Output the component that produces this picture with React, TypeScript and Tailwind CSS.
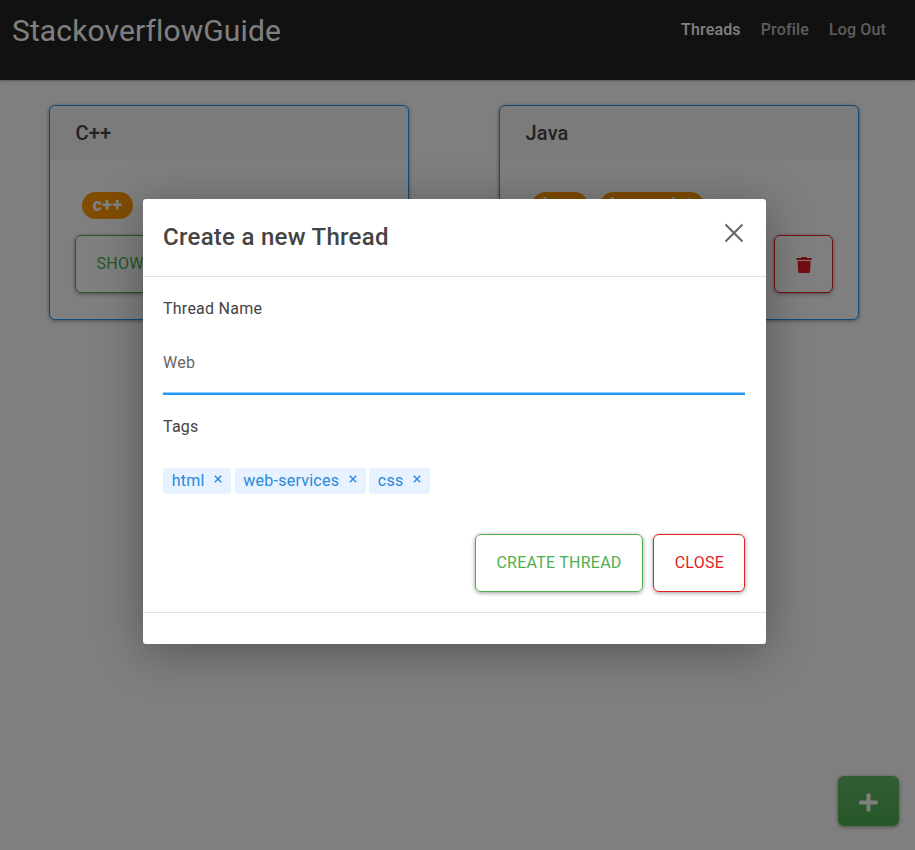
import type { ReactNode } from 'react';

const buttonBase =
  'flex h-[58px] items-center rounded-[6px] border pb-px text-base uppercase leading-6 shadow-[0_1px_4px_rgba(0,0,0,0.4)]';

function GreenButton({ children }: { children: ReactNode }) {
  return <button className={`${buttonBase} border-[#4caf50] pl-[20.5px] pr-[20.5px] text-[#4caf50]`}>{children}</button>;
}

function RedButton({ children }: { children: ReactNode }) {
  return <button className={`${buttonBase} border-[#e51c23] pl-[20.5px] pr-5 text-[#e51c23]`}>{children}</button>;
}

function Card({ title, tags }: { title: string; tags: string[] }) {
  return (
    <div className="h-[215px] w-[360px] rounded-[6px] border border-[#2196f3] bg-white shadow-[0_1px_4px_rgba(0,0,0,0.4)]">
      <div className="flex h-[54px] items-center rounded-t-[5px] bg-black/[0.03] px-[25.5px]">
        <h2 className="text-[20px] font-medium leading-6 tracking-[0.2px] text-[#444]">{title}</h2>
      </div>
      <div className="px-[25px] pt-8">
        <div className="flex gap-[12px] pl-[7px]">
          {tags.map((tag) => (
            <span
              key={tag}
              className="h-[27px] rounded-full bg-[#ff9800] px-[10.5px] text-[18px] font-extrabold leading-[26px] tracking-[0.4px] text-white"
            >
              {tag}
            </span>
          ))}
        </div>
        <div className="mt-4 flex justify-between">
          <GreenButton>Show</GreenButton>
          <RedButton>
            <svg className="mr-[0.5px] mt-[2px]" width="16" height="16" viewBox="0 0 16 16" fill="currentColor" aria-hidden="true">
              <path d="M5 .9 5.6 0h5l.6.9H15.6v2H.5v-2ZM1.6 3.9h13l-.5 10.8a1.4 1.4 0 0 1-1.4 1.3H3.5a1.4 1.4 0 0 1-1.4-1.3Z" />
            </svg>
          </RedButton>
        </div>
      </div>
    </div>
  );
}

function Chip({ label }: { label: string }) {
  return (
    <span className="flex h-[26px] items-center rounded-[3px] bg-[#e6f2ff] pl-[8.7px] pr-[9px] text-base leading-6 text-[#2c88d9]">
      {label}
      <svg className="mb-[5px] ml-[9.3px]" width="8" height="8" viewBox="0 0 8 8" stroke="currentColor" strokeWidth="1.4">
        <path d="M.8.8l6.4 6.4M7.2.8L.8 7.2" />
      </svg>
    </span>
  );
}

export default function App() {
  return (
    <div className="relative h-[850px] w-full overflow-hidden bg-white font-['Roboto',sans-serif] tracking-[0.25px] text-[#444]">
      <header className="flex h-20 justify-between bg-[#222] pl-3 pr-[29px] shadow-[0_1px_2px_rgba(0,0,0,0.3)]">
        <span className="pt-[7px] text-[30px] leading-[48px] tracking-[0.12px] text-white">StackoverflowGuide</span>
        <nav className="flex gap-5 pt-[18px] text-base font-medium leading-6 tracking-[0.15px] text-white/70">
          <a className="text-white">Threads</a>
          <a>Profile</a>
          <a>Log Out</a>
        </nav>
      </header>
      <main className="flex gap-[90px] pl-[49px] pt-[25px]">
        <Card title="C++" tags={['c++']} />
        <Card title="Java" tags={['java', 'javascript']} />
      </main>
      <button className="absolute left-[838px] top-[776px] flex h-[50px] w-[61px] items-center justify-center rounded-[6px] bg-[#4caf50] bg-linear-to-b from-white/15 to-white/0 text-white shadow-[0_1px_4px_rgba(0,0,0,0.4)]">
        <svg className="mt-[2px]" width="19" height="19" viewBox="0 0 19 19" fill="currentColor" aria-hidden="true">
          <rect x="7.5" y=".5" width="4" height="18" rx="1.3" />
          <rect x=".2" y="7.5" width="18.6" height="4" rx="1.3" />
        </svg>
      </button>

      <div className="absolute inset-0 bg-black/50" />

      <div
        role="dialog"
        className="absolute left-[143px] top-[199px] h-[445px] w-[623px] rounded-[3px] bg-white shadow-[0_8px_48px_rgba(0,0,0,0.33)]"
      >
        <div className="flex h-[78px] justify-between border-b border-[#dee2e6] pl-5 pr-[22px]">
          <h1 className="pt-[20px] text-[24px] font-medium leading-9 tracking-[0.28px]">Create a new Thread</h1>
          <svg className="mt-[24px]" width="20" height="20" viewBox="0 0 20 20" stroke="#666" strokeWidth="2" aria-label="Close">
            <path d="M1.5 1.5l17 17M18.5 1.5l-17 17" />
          </svg>
        </div>
        <div className="h-[336px] border-b border-[#dee2e6] px-5 pr-[21px] pt-5 text-base leading-6">
          <p>Thread Name</p>
          <div className="mt-[17px] h-[57px] pt-[13px] text-[#666] shadow-[inset_0_-2px_0_#2196f3,inset_0_-3px_0_#90caf9]">Web</div>
          <p className="mt-[20px]">Tags</p>
          <div className="mt-[29px] flex gap-[3.6px]">
            <Chip label="html" />
            <Chip label="web-services" />
            <Chip label="css" />
          </div>
          <div className="mt-10 flex justify-end gap-[10px]">
            <GreenButton>Create Thread</GreenButton>
            <RedButton>Close</RedButton>
          </div>
        </div>
      </div>
    </div>
  );
}
